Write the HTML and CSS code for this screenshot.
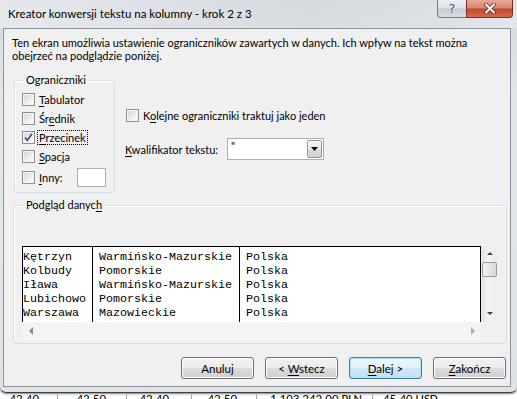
FILE: index.html
```
<!DOCTYPE html>
<html lang='pl'>
<head>
	<meta charset='UTF-8'>
	<title>Kreator konwersji tekstu na kolumny - krok 2 z 3</title>
	<link rel="stylesheet" href="styles.css">
</head>
<body>
	<div class='window'>
		<div class='titlebar'>
			<span class='title'>Kreator konwersji tekstu na kolumny - krok 2 z 3</span>
			<div class='caption-buttons'>
				<span class='cap-btn help'>?</span>
				<span class='cap-btn close'>
					<svg width='12' height='11' viewBox='0 0 12 11'><path d='M2 1.5 L10 9.5 M10 1.5 L2 9.5' stroke='#5a1a10' stroke-width='3.6' stroke-linecap='round'/><path d='M2 1.5 L10 9.5 M10 1.5 L2 9.5' stroke='#fff' stroke-width='2.2' stroke-linecap='round'/></svg>
				</span>
			</div>
		</div>

		<div class='client'>
			<p class='intro'>Ten ekran umożliwia ustawienie ograniczników zawartych w danych. Ich wpływ na tekst można<br>obejrzeć na podglądzie poniżej.</p>

			<div class='options'>
				<fieldset class='group delims'>
					<legend>Ograniczniki</legend>
					<div class='check'><span class='box'></span><span><u>T</u>abulator</span></div>
					<div class='check'><span class='box'></span><span>Śr<u>e</u>dnik</span></div>
					<div class='check'><span class='box checked'><svg width='11' height='11' viewBox='0 0 11 11'><path d='M2 5.5 L4.3 8.3 L9 1.8' fill='none' stroke='#3d4f8a' stroke-width='1.7'/></svg></span><span class='focused'><u>P</u>rzecinek</span></div>
					<div class='check'><span class='box'></span><span><u>S</u>pacja</span></div>
					<div class='check other'><span class='box'></span><span><u>I</u>nny:</span><span class='textbox'></span></div>
				</fieldset>

				<div class='side'>
					<div class='check'><span class='box'></span><span>K<u>o</u>lejne ograniczniki traktuj jako jeden</span></div>
					<div class='qualifier'>
						<span class='qualifier-label'><u>K</u>walifikator tekstu:</span>
						<div class='combo'>
							<span class='combo-value'>"</span>
							<span class='combo-btn'><svg width='7' height='4' viewBox='0 0 7 4'><path d='M0 0 H7 L3.5 4 Z' fill='#000'/></svg></span>
						</div>
					</div>
				</div>
			</div>

			<fieldset class='group preview'>
				<legend>Podgląd danyc<u>h</u></legend>
				<div class='preview-frame'>
					<div class='preview-data'>
						<div class='col col-city'>
							<div>Kętrzyn</div><div>Kolbudy</div><div>Iława</div><div>Lubichowo</div><div>Warszawa</div>
						</div>
						<div class='col col-region'>
							<div>Warmińsko-Mazurskie</div><div>Pomorskie</div><div>Warmińsko-Mazurskie</div><div>Pomorskie</div><div>Mazowieckie</div>
						</div>
						<div class='col col-country'>
							<div>Polska</div><div>Polska</div><div>Polska</div><div>Polska</div><div>Polska</div>
						</div>
					</div>
					<div class='vscroll'>
						<span class='arrow up'></span>
						<span class='thumb'></span>
						<span class='arrow down'></span>
					</div>
					<div class='hscroll'>
						<span class='arrow left'></span>
						<span class='arrow right'></span>
					</div>
					<div class='corner'></div>
				</div>
			</fieldset>

			<div class='actions'>
				<button>Anuluj</button>
				<button>&lt; <u>W</u>stecz</button>
				<button class='default'><u>D</u>alej &gt;</button>
				<button><u>Z</u>akończ</button>
			</div>
		</div>
	</div>

	<div class='sheet'>
		<span class='cell c1'>42,40</span>
		<span class='cell c2'>42,50</span>
		<span class='cell c3'>42,40</span>
		<span class='cell c4'>42,50</span>
		<span class='cell c5'>1 103 242,00 PLN</span>
		<span class='cell c6'>45,40 USD</span>
	</div>
</body>
</html>
```

FILE: styles.css
```
html, body{
	margin:0;
	padding:0;
}
body{
	width:517px;
	height:399px;
	overflow:hidden;
	background-color:#fff;
	font-family:"Segoe UI", Lato, sans-serif;
	font-size:11px;
	color:#000;
}
u{
	text-decoration-thickness:1px;
	text-underline-offset:2px;
}

/* window frame */
.window{
	height:393px;
	box-sizing:border-box;
	display:flex;
	flex-direction:column;
	background:linear-gradient(180deg, #d6dae0 0%, #e4e7ea 30%, #dfe2e5 100%);
	border-bottom:1px solid #3c3f44;
	border-radius:0 0 6px 6px;
	box-shadow:0 1px 2px rgba(0,0,0,.5);
}
.titlebar{
	height:28px;
	flex:0 0 28px;
	display:flex;
	justify-content:space-between;
	align-items:flex-start;
	background:linear-gradient(90deg, rgba(255,255,255,.35), rgba(255,255,255,0) 60%, rgba(255,255,255,.25));
}
.title{
	margin:6px 0 0 8px;
	font-size:11.5px;
	line-height:16px;
	white-space:nowrap;
}
.caption-buttons{
	display:flex;
	margin-right:4px;
}
.cap-btn{
	height:18px;
	box-sizing:border-box;
	display:flex;
	align-items:center;
	justify-content:center;
	border:1px solid #737a84;
	border-top:none;
}
.help{
	width:29px;
	border-right:none;
	border-radius:0 0 0 4px;
	background:linear-gradient(180deg, #eef0f2 0%, #dde1e5 45%, #c6ccd3 55%, #d8dde2 100%);
	color:#54595f;
	font-family:"DejaVu Sans", sans-serif;
	font-size:13px;
	text-shadow:0 0 2px #fff;
}
.close{
	width:47px;
	border-color:#7a2d22;
	border-radius:0 0 4px 0;
	background:linear-gradient(180deg, #e7a99b 0%, #d88570 45%, #c5492f 55%, #d66a4f 100%);
}

/* client area */
.client{
	flex:1 1 auto;
	margin:0 6px 5px 3px;
	display:flex;
	flex-direction:column;
	background-color:#f0f0f0;
	border:1px solid #8c939b;
}
.intro{
	height:40px;
	box-sizing:border-box;
	margin:0;
	padding:7px 8px 0;
	line-height:13px;
	white-space:nowrap;
}
.options{
	display:flex;
	margin-top:3px;
}
.group{
	margin:0;
	padding:0;
	border:1px solid #d5dfe5;
	border-radius:3px;
	box-shadow:inset 1px 1px 0 #fff;
}
.group legend{
	margin-left:2px;
	padding:0 2px;
	line-height:16px;
}
.delims{
	width:101px;
	height:121px;
	box-sizing:border-box;
	margin-left:10px;
	padding:2px 0 0 7px;
}
.check{
	display:flex;
	align-items:center;
	height:19px;
	white-space:nowrap;
}
.box{
	width:13px;
	height:13px;
	flex:0 0 13px;
	box-sizing:border-box;
	margin-right:4px;
	display:flex;
	align-items:center;
	justify-content:center;
	border:1px solid #8e8f8f;
	background:linear-gradient(135deg, #cfd3d8 0%, #eef0f1 60%, #fafafa 100%);
	box-shadow:inset 0 0 0 1px #f6f6f6;
}
.focused{
	outline:1px dotted #000;
	outline-offset:0;
	padding:0 1px;
	margin-left:-1px;
}
.other{
	height:21px;
	margin-top:1px;
}
.textbox{
	width:29px;
	height:19px;
	box-sizing:border-box;
	margin-left:14px;
	background-color:#fff;
	border:1px solid #abadb3;
}
.side{
	margin-left:11px;
	padding-top:34px;
}
.qualifier{
	display:flex;
	align-items:center;
	margin-top:13px;
	margin-left:-1px;
}
.qualifier-label{
	width:102px;
	white-space:nowrap;
}
.combo{
	width:97px;
	height:22px;
	box-sizing:border-box;
	display:flex;
	justify-content:space-between;
	padding:1px;
	background-color:#fff;
	border:1px solid #abadb3;
}
.combo-value{
	padding-left:2px;
	line-height:12px;
}
.combo-btn{
	width:15px;
	box-sizing:border-box;
	display:flex;
	align-items:center;
	justify-content:center;
	border:1px solid #8f98a3;
	border-radius:2px;
	background:linear-gradient(180deg, #f2f2f2 0%, #ebebeb 50%, #dddddd 51%, #cfcfcf 100%);
}

/* data preview */
.preview{
	height:147px;
	box-sizing:border-box;
	margin:4px 3px 0 9px;
	padding:0 0 0 8px;
}
.preview-frame{
	margin-top:33px;
	width:475px;
	display:grid;
	grid-template-columns:459px 16px;
	grid-template-rows:76px 18px;
}
.preview-data{
	display:flex;
	overflow:hidden;
	box-sizing:border-box;
	background-color:#fff;
	border:1px solid #000;
	border-bottom:none;
	font-family:"Courier New", "Liberation Mono", monospace;
	font-size:11.67px;
	line-height:14px;
	white-space:nowrap;
}
.col{
	padding-top:3px;
}
.col-city{
	width:69px;
}
.col-region{
	width:140px;
	padding-left:6px;
	border-left:1px solid #000;
}
.col-country{
	flex:1 1 auto;
	padding-left:6px;
	border-left:1px solid #000;
}
.vscroll{
	display:flex;
	flex-direction:column;
	align-items:center;
	margin-left:1px;
	background:linear-gradient(90deg, #e3e3e3, #f3f3f3 40%, #ececec);
}
.arrow{
	width:0;
	height:0;
	border:3px solid transparent;
}
.arrow.up{
	margin-top:6px;
	border-top:none;
	border-bottom:3px solid #404040;
}
.thumb{
	width:15px;
	height:15px;
	box-sizing:border-box;
	margin-top:7px;
	border:1px solid #9a9a9a;
	border-radius:2px;
	background:linear-gradient(90deg, #f3f3f3, #e6e6e6 50%, #d7d7d7);
}
.arrow.down{
	margin-top:auto;
	margin-bottom:7px;
	border-bottom:none;
	border-top:3px solid #404040;
}
.hscroll{
	display:flex;
	justify-content:space-between;
	align-items:center;
	padding:0 6px 0 7px;
	background-color:#f4f4f4;
}
.arrow.left{
	border-width:4px;
	border-left:none;
	border-right:4px solid #8d8d8d;
}
.arrow.right{
	border-width:4px;
	border-right:none;
	border-left:4px solid #b0b0b0;
}
.corner{
	background-color:#f0f0f0;
}

/* buttons */
.actions{
	display:flex;
	justify-content:flex-end;
	gap:11px;
	margin-top:13px;
	padding-right:4px;
}
.actions button{
	width:73px;
	height:22px;
	padding:0;
	font-family:inherit;
	font-size:11.5px;
	color:#000;
	border:1px solid #707070;
	border-radius:3px;
	background:linear-gradient(180deg, #f2f2f2 0%, #ebebeb 50%, #dddddd 51%, #cfcfcf 100%);
	box-shadow:inset 0 0 0 1px #fbfbfb;
}
.actions button.default{
	border-color:#3c7fb1;
	background:linear-gradient(180deg, #f0f8fc 0%, #e3f1fa 50%, #d0e8f6 51%, #c4e1f3 100%);
	box-shadow:inset 0 0 0 1px #a9e0fb;
}

/* spreadsheet behind the dialog */
.sheet{
	display:flex;
	height:12px;
	font-family:"Calibri", "Liberation Sans", sans-serif;
	font-size:13px;
	line-height:12px;
}
.cell{
	box-sizing:border-box;
	text-align:right;
	border-right:1px solid #a8a8a8;
	white-space:nowrap;
}
.c1{ width:58px; padding-right:18px; }
.c2{ width:69px; padding-right:20px; }
.c3{ width:65px; padding-right:22px; }
.c4{ width:65px; padding-right:19px; }
.c5{ width:116px; padding-right:10px; }
.c6{ width:80px; text-align:left; padding-left:10px; border-right:none; }
```
